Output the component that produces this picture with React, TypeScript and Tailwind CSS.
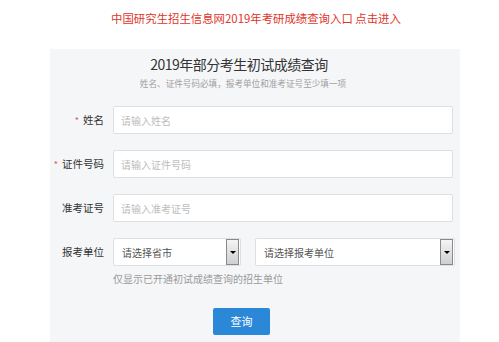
import React from 'react';

const font = { fontFamily: '"Noto Sans CJK SC", "Noto Sans", sans-serif' };

function Label({ text, required }: { text: string; required?: boolean }) {
  return (
    <div className="w-[55px] shrink-0 flex items-center justify-end gap-[4px] text-[10.5px] text-[#333] pr-[1px]">
      {required && <span className="text-[#e8504a] text-[9px] leading-none">*</span>}
      <span>{text}</span>
    </div>
  );
}

function TextField({ placeholder }: { placeholder: string }) {
  return (
    <input
      readOnly
      placeholder={placeholder}
      className="w-[340px] h-[28px] bg-white border border-[#dcdfe3] rounded-[2px] px-[7px] text-[10px] placeholder:text-[#bdbdbd] outline-none"
    />
  );
}

function SelectBox({ text, width }: { text: string; width: string }) {
  return (
    <div className={`${width} h-[28px] bg-white border border-[#dcdfe3] rounded-[2px] flex items-center justify-between pl-[8px] pr-[1px]`}>
      <span className="text-[10px] text-[#555]">{text}</span>
      <div className="w-[13px] h-[26px] border border-[#8a8a8a] bg-gradient-to-b from-[#f4f4f4] to-[#cfcfcf] flex items-center justify-center">
        <div className="w-0 h-0 border-l-[3px] border-r-[3px] border-t-[3px] border-l-transparent border-r-transparent border-t-black" />
      </div>
    </div>
  );
}

export default function App() {
  return (
    <div className="w-[499px] h-[342px] bg-white overflow-hidden" style={font}>
      <div className="pt-[10px] pl-[13px] flex justify-center">
        <span className="text-[11.4px] leading-[16px] text-[#e0342a]">
          中国研究生招生信息网2019年考研成绩查询入口 点击进入
        </span>
      </div>

      <div className="mt-[23px] ml-[50px] w-[410px] h-[300px] bg-[#f5f6f8] pt-[5px]">
        <div className="mr-[32px] text-center text-[14px] leading-[20px] tracking-[-0.5px] text-[#333]">
          2019年部分考生初试成绩查询
        </div>
        <div className="mt-[2.5px] mr-[24px] text-center text-[8.6px] leading-[12px] text-[#a0a0a0]">
          姓名、证件号码必填，报考单位和准考证号至少填一项
        </div>

        <div className="mt-[17.5px] flex flex-col gap-[16px]">
          <div className="flex items-center gap-[8px]">
            <Label text="姓名" required />
            <TextField placeholder="请输入姓名" />
          </div>
          <div className="flex items-center gap-[8px]">
            <Label text="证件号码" required />
            <TextField placeholder="请输入证件号码" />
          </div>
          <div className="flex items-center gap-[8px]">
            <Label text="准考证号" />
            <TextField placeholder="请输入准考证号" />
          </div>
          <div className="flex items-center gap-[8px]">
            <Label text="报考单位" />
            <div className="flex items-center gap-[14px]">
              <SelectBox text="请选择省市" width="w-[128px]" />
              <SelectBox text="请选择报考单位" width="w-[200px]" />
            </div>
          </div>
        </div>

        <div className="mt-[6px] ml-[63px] text-[10px] leading-[14px] text-[#9a9a9a]">
          仅显示已开通初试成绩查询的招生单位
        </div>

        <button className="mt-[22px] ml-[163px] w-[57px] h-[27px] bg-[#2b87d8] rounded-[2px] text-white text-[11px]">
          查询
        </button>
      </div>
    </div>
  );
}
